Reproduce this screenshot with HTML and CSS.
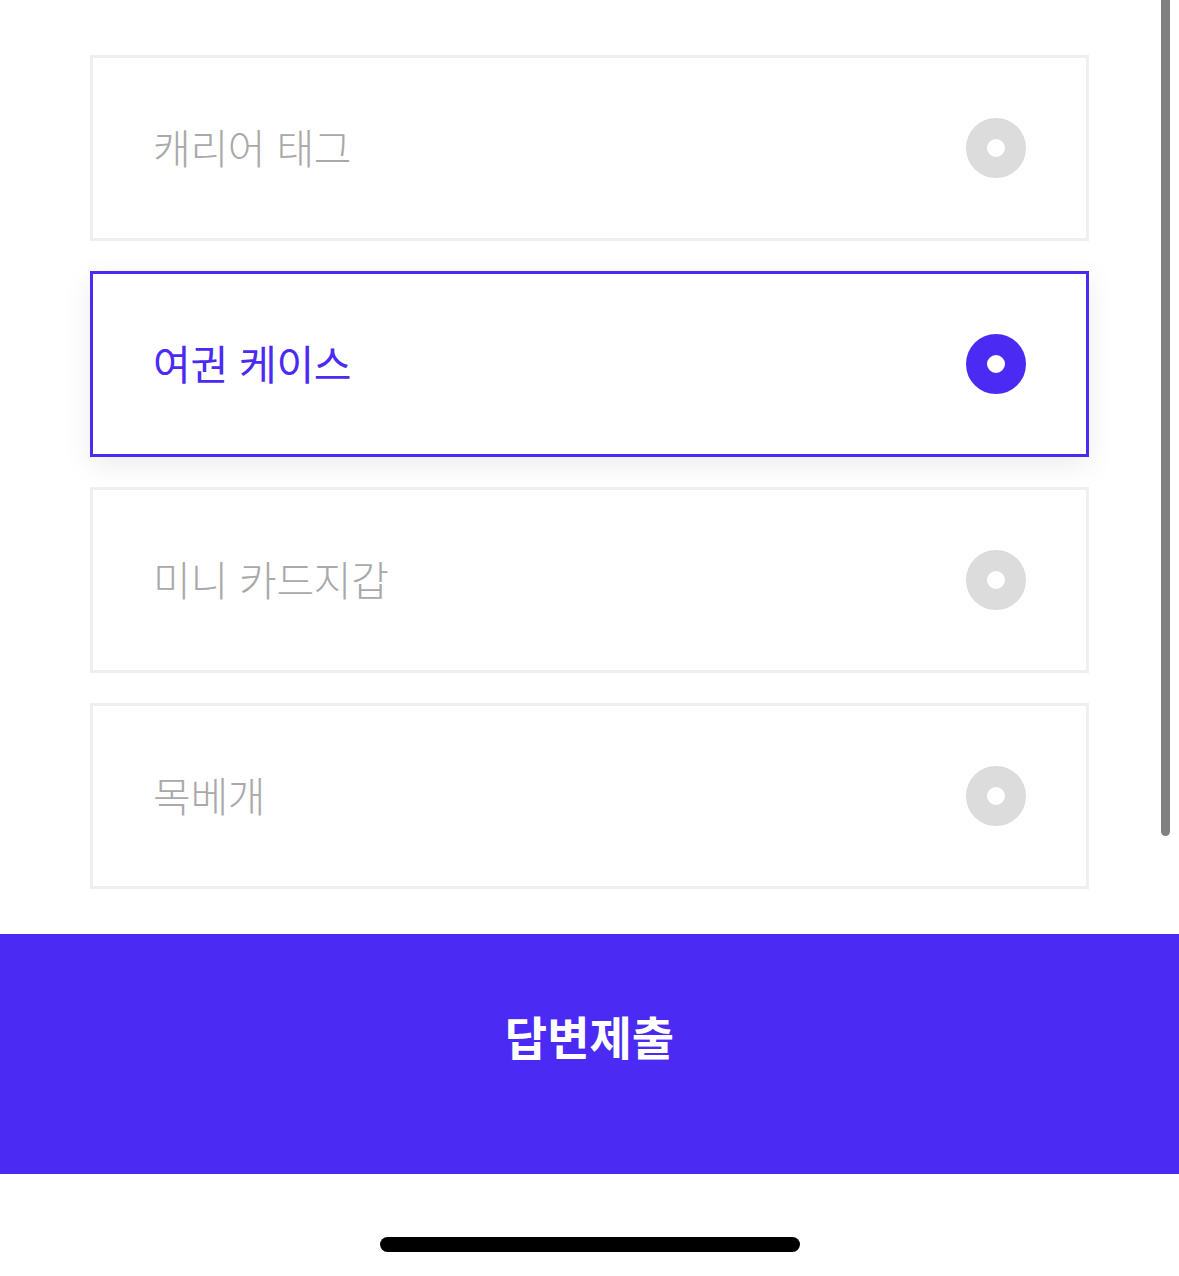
FILE: index.html
```html
<!doctype html>
<html lang="ko">
	<head>
		<meta charset='utf-8'>
		<title>답변제출</title>
		<link rel="stylesheet" href="styles.css">
	</head>
	<body>
		<main class='page'>
			<ul class='options'>
				<li class='option'>
					<span class='label'>캐리어 태그</span>
					<span class='radio'></span>
				</li>
				<li class='option selected'>
					<span class='label'>여권 케이스</span>
					<span class='radio'></span>
				</li>
				<li class='option'>
					<span class='label'>미니 카드지갑</span>
					<span class='radio'></span>
				</li>
				<li class='option'>
					<span class='label'>목베개</span>
					<span class='radio'></span>
				</li>
			</ul>
			<button class='submit'>답변제출</button>
			<div class='home-area'><div class='home-bar'></div></div>
		</main>
		<div class='scrollbar'></div>
	</body>
</html>
```

FILE: styles.css
```css
:root {
	--accent: #4b2bf4;
	--line: #efefef;
	--muted: #a9a9a9;
}

html, body {
	margin: 0;
	background: #fff;
}

body {
	font-family: "Noto Sans CJK KR", "Noto Sans", sans-serif;
	width: 1179px;
	height: 1276px;
	overflow: hidden;
}

.page {
	display: flex;
	flex-direction: column;
}

/* option list */

.options {
	list-style: none;
	margin: 0;
	padding: 55px 90px 0 90px;
	display: flex;
	flex-direction: column;
	gap: 30px;
}

.option {
	box-sizing: border-box;
	height: 186px;
	border: 3px solid var(--line);
	background: #fff;
	padding: 0 60px;
	display: flex;
	align-items: center;
	justify-content: space-between;
}

.label {
	font-size: 41px;
	font-weight: 300;
	letter-spacing: -0.3px;
	line-height: 1;
	margin-top: -4px;
	color: var(--muted);
}

.radio {
	box-sizing: border-box;
	width: 60px;
	height: 60px;
	border-radius: 50%;
	border: 21px solid #dcdcdc;
	background: #fff;
}

.option.selected {
	border-color: var(--accent);
	box-shadow: 0 8px 28px rgba(0, 0, 0, 0.08);
}

.option.selected .label {
	color: var(--accent);
	font-weight: 400;
}

.option.selected .radio {
	border-color: var(--accent);
}

/* submit */

.submit {
	margin-top: 45px;
	height: 240px;
	padding: 0 0 38px 0;
	border: none;
	background: var(--accent);
	color: #fff;
	font-family: inherit;
	font-size: 46px;
	font-weight: 700;
	letter-spacing: 0;
	line-height: 1;
}

.home-area {
	height: 102px;
	display: flex;
	justify-content: center;
	padding-top: 63px;
	box-sizing: border-box;
}

.home-bar {
	width: 420px;
	height: 15px;
	border-radius: 8px;
	background: #000;
}

/* overlay scrollbar */

.scrollbar {
	position: absolute;
	top: 0;
	left: 1161px;
	width: 9px;
	height: 836px;
	border-radius: 0 0 5px 5px;
	background: #808080;
}
```
